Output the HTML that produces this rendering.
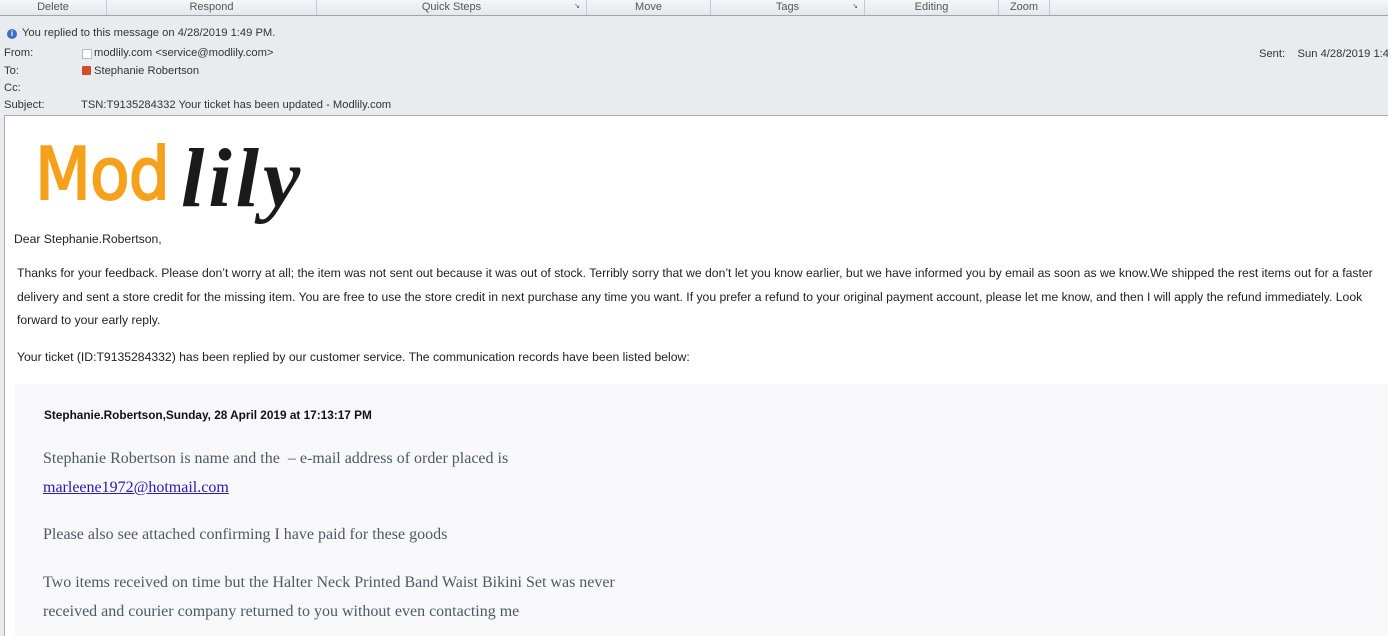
<!DOCTYPE html>
<html><head><meta charset="utf-8"><style>
body{margin:0;width:1388px;height:635px;overflow:hidden;background:#e9ecef;font-family:"Liberation Sans",Arial,sans-serif;position:relative}
.a{position:absolute;white-space:nowrap}
.rib{position:absolute;left:0;top:0;width:1388px;height:15px;background:linear-gradient(#f4f6f8,#e4e8ec);border-bottom:1px solid #9ea5ad;font-size:11px;color:#555}
.g{position:absolute;top:0;height:15px;text-align:center;border-right:1px solid #c5cad0;line-height:14px}
.h{font-size:11.2px;color:#333}
.body{position:absolute;left:4px;top:115px;width:1384px;height:520px;overflow:hidden;background:#fff;border-left:1px solid #aab;border-top:1px solid #aab}
.p{font-size:12.2px;color:#222;line-height:23.5px}
.q{position:absolute;left:10px;top:268px;width:1374px;height:260px;background:#f8f8fa}
.s{font-family:"Liberation Serif",serif;font-size:16px;color:#4b5968}
</style></head><body>
<div class="rib">
<div class="g" style="left:0;width:106px">Delete</div>
<div class="g" style="left:107px;width:209px">Respond</div>
<div class="g" style="left:317px;width:269px">Quick Steps<span style="position:absolute;right:6px;font-size:7px">&#8600;</span></div>
<div class="g" style="left:587px;width:123px">Move</div>
<div class="g" style="left:711px;width:153px">Tags<span style="position:absolute;right:6px;font-size:7px">&#8600;</span></div>
<div class="g" style="left:865px;width:133px">Editing</div>
<div class="g" style="left:999px;width:50px">Zoom</div>
</div>
<div class="a" style="left:7px;top:29px;width:10px;height:10px;border-radius:50%;background:#3b6fc4;color:#fff;font-size:8px;text-align:center;line-height:10px;font-weight:bold">i</div>
<div class="a h" style="left:22px;top:27px">You replied to this message on 4/28/2019 1:49 PM.</div>
<div class="a h" style="left:4px;top:47px">From:</div>
<div class="a" style="left:82px;top:49px;width:8px;height:8px;border:1px solid #bbb;background:#fff"></div>
<div class="a h" style="left:94px;top:47px">modlily.com &lt;service@modlily.com&gt;</div>
<div class="a h" style="left:4px;top:65px">To:</div>
<div class="a" style="left:82px;top:66px;width:9px;height:9px;background:#d44b2a;border-radius:1px"></div>
<div class="a h" style="left:94px;top:65px">Stephanie Robertson</div>
<div class="a h" style="left:4px;top:82px">Cc:</div>
<div class="a h" style="left:4px;top:99px">Subject:</div>
<div class="a h" style="left:81px;top:99px">TSN:T9135284332 Your ticket has been updated - Modlily.com</div>
<div class="a h" style="left:1259px;top:48px">Sent:&nbsp;&nbsp;&nbsp; Sun 4/28/2019 1:47</div>
<div class="body">
<div class="a" style="left:30px;top:16px;font-size:72px;color:#f5a11c;font-weight:normal;-webkit-text-stroke:2px #f5a11c;letter-spacing:-1px;font-family:'DejaVu Sans',sans-serif;transform:scaleX(0.9);transform-origin:left">Mod</div>
<div class="a" style="left:176px;top:14px;font-size:84px;color:#1a1a1a;font-style:italic;font-weight:bold;font-family:'Liberation Serif',serif;letter-spacing:4px">lily</div>
<div class="a p" style="left:9px;top:112px">Dear Stephanie.Robertson,</div>
<div class="a p" style="left:12px;top:146px;width:1368px;white-space:normal">Thanks for your feedback. Please don’t worry at all; the item was not sent out because it was out of stock. Terribly sorry that we don’t let you know earlier, but we have informed you by email as soon as we know.We shipped the rest items out for a faster delivery and sent a store credit for the missing item. You are free to use the store credit in next purchase any time you want. If you prefer a refund to your original payment account, please let me know, and then I will apply the refund immediately. Look forward to your early reply.</div>
<div class="a p" style="left:12px;top:230px">Your ticket (ID:T9135284332) has been replied by our customer service. The communication records have been listed below:</div>
<div class="q">
<div class="a" style="left:29px;top:24px;font-size:11.8px;font-weight:bold;color:#111">Stephanie.Robertson,Sunday, 28 April 2019 at 17:13:17 PM</div>
<div class="a s" style="left:28px;top:66px">Stephanie Robertson is name and the &nbsp;– e-mail address of order placed is</div>
<div class="a s" style="left:28px;top:95px;color:#2a1ab0;text-decoration:underline">marleene1972@hotmail.com</div>
<div class="a s" style="left:28px;top:142px">Please also see attached confirming I have paid for these goods</div>
<div class="a s" style="left:28px;top:190px">Two items received on time but the Halter Neck Printed Band Waist Bikini Set was never</div>
<div class="a s" style="left:28px;top:219px">received and courier company returned to you without even contacting me</div>
</div>
</div>
</body></html>
